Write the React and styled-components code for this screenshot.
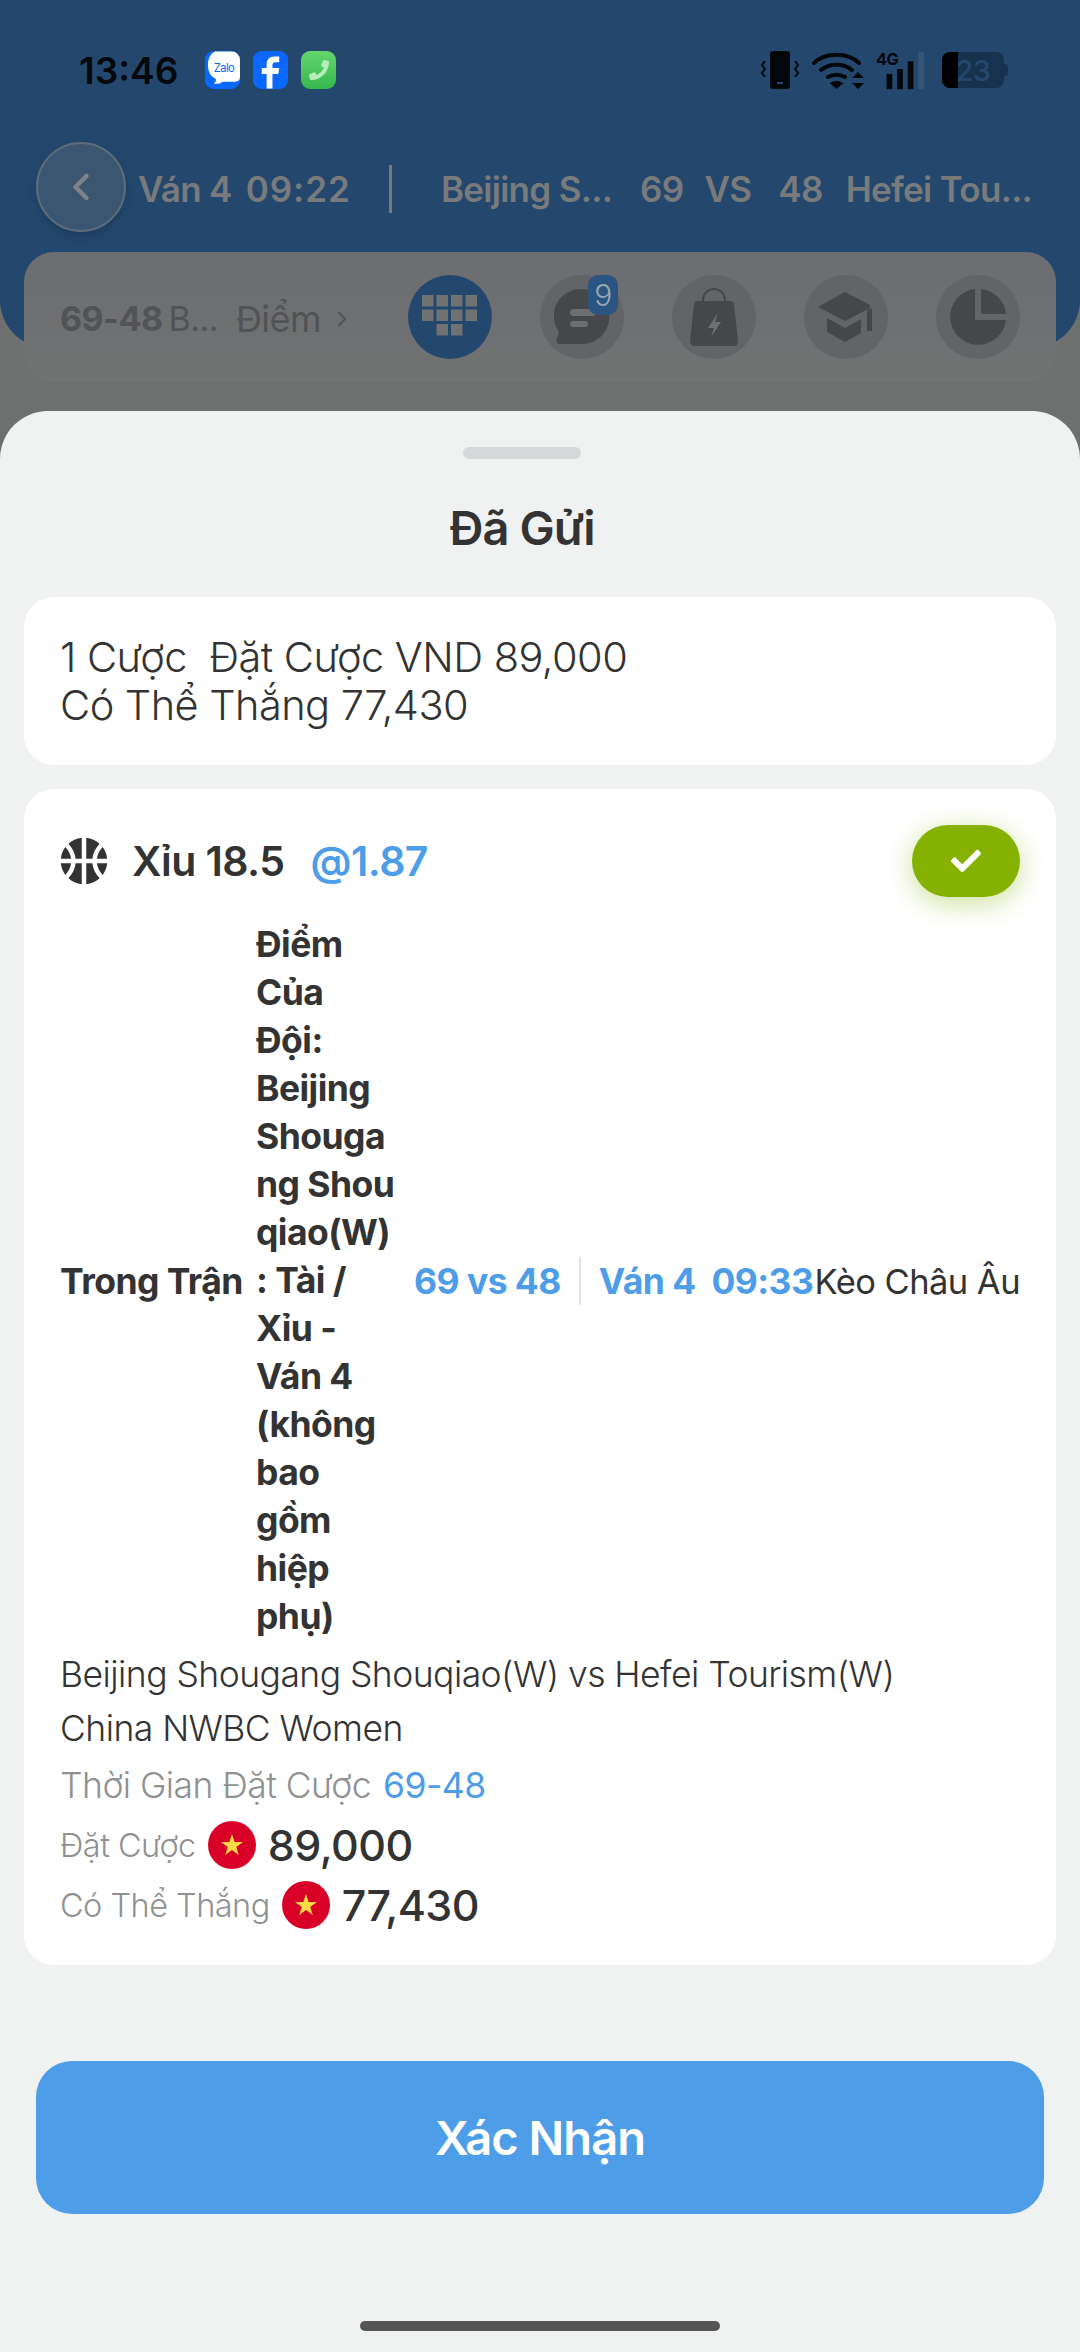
import React from 'react';
import styled, { createGlobalStyle } from 'styled-components';
import { FaBasketballBall, FaCheck, FaPhoneAlt } from 'react-icons/fa';
import { ChevronLeft, ChevronRight } from 'lucide-react';

const GlobalStyle = createGlobalStyle`
  html, body {
    margin: 0;
    padding: 0;
    background: #6e6f6f;
  }
  * {
    box-sizing: border-box;
  }
  body {
    font-family: Inter, "Noto Sans", sans-serif;
    letter-spacing: -0.034em;
  }
`;

const Page = styled.div`
  position: relative;
  width: 1080px;
  height: 2352px;
  overflow: hidden;
  background: #6e6f6f;
`;

const Header = styled.div`
  height: 348px;
  padding: 50px 36px 0 36px;
  background: #24486d;
  border-radius: 0 0 48px 48px;
`;

const StatusBar = styled.div`
  height: 40px;
  display: flex;
  align-items: center;
  padding: 0 36px 0 43px;
`;

const Time = styled.span`
  font-size: 37px;
  font-weight: 600;
  letter-spacing: 0;
  color: #05090e;
  margin-right: 27px;
`;

const AppIcon = styled.div`
  width: 35px;
  height: 38px;
  margin-right: 13px;
  border-radius: 9px;
  overflow: hidden;
  display: flex;
  align-items: center;
  justify-content: center;
  background: ${(p) => p.$bg};
  color: #b6ecb8;
`;

const StatusRight = styled.div`
  margin-left: auto;
  display: flex;
  align-items: center;
  gap: 12px;
`;

const Battery = styled.div`
  position: relative;
  width: 62px;
  height: 36px;
  margin-left: 6px;
  border-radius: 8px;
  overflow: hidden;
  background: #17324e;
  display: flex;
  align-items: center;
  justify-content: center;
  font-size: 29px;
  font-weight: 500;
  color: #24486d;
  &::before {
    content: '';
    position: absolute;
    left: 0;
    top: 0;
    bottom: 0;
    width: 16px;
    background: #000;
  }
`;

const BatteryCap = styled.div`
  width: 4px;
  height: 12px;
  margin-left: -12px;
  border-radius: 0 3px 3px 0;
  background: #17324e;
`;

const TitleRow = styled.div`
  margin-top: 54px;
  height: 90px;
  display: flex;
  align-items: center;
  font-size: 35px;
  font-weight: 600;
  letter-spacing: -0.02em;
  color: #787a7c;
  white-space: nowrap;
`;

const BackButton = styled.div`
  width: 90px;
  height: 90px;
  margin: 0 12px 4px 0;
  flex-shrink: 0;
  border-radius: 50%;
  border: 2px solid #5c6c7c;
  background: #3b5670;
  box-shadow: 0 4px 8px rgba(20, 50, 80, 0.5);
  display: flex;
  align-items: center;
  justify-content: center;
  color: #7d8388;
`;

const TitleDivider = styled.div`
  width: 3px;
  height: 48px;
  margin: 0 49px 0 38px;
  flex-shrink: 0;
  background: #787a7c;
`;

const Score = styled.span`
  margin-left: ${(p) => p.$gap}px;
  letter-spacing: ${(p) => (p.$wide ? '1px' : 'inherit')};
`;

const Toolbar = styled.div`
  position: relative;
  margin: -96px 24px 0 24px;
  height: 130px;
  padding: 0 36px;
  border-radius: 30px;
  background: linear-gradient(#6b6d71, #717272);
  display: flex;
  align-items: center;
`;

const ToolbarLabel = styled.div`
  width: 348px;
  padding-top: 3px;
  display: flex;
  align-items: center;
  font-size: 34px;
  color: #525354;
  white-space: nowrap;
  b {
    font-weight: 700;
    margin-right: 6px;
  }
  span {
    margin: 0 8px 0 18px;
    font-size: 36px;
  }
`;

const ToolButton = styled.div`
  position: relative;
  width: 84px;
  height: 84px;
  margin-right: 48px;
  flex-shrink: 0;
  border-radius: 50%;
  background: ${(p) => (p.$active ? '#24486d' : '#626467')};
  color: #464748;
  display: flex;
  align-items: center;
  justify-content: center;
  &:last-child {
    margin-right: 0;
  }
`;

const ToolBadge = styled.div`
  position: absolute;
  top: 0;
  right: 6px;
  width: 30px;
  height: 40px;
  border-radius: 10px;
  background: #2a5583;
  color: #9aa7b3;
  font-size: 30px;
  font-weight: 300;
  display: flex;
  align-items: center;
  justify-content: center;
`;

const Sheet = styled.div`
  position: absolute;
  left: 0;
  right: 0;
  top: 411px;
  bottom: 0;
  padding: 0 24px;
  border-radius: 48px 48px 0 0;
  background: #f0f1f1;
  display: flex;
  flex-direction: column;
  color: #333;
`;

const Handle = styled.div`
  width: 118px;
  height: 12px;
  margin: 36px 0 0 439px;
  border-radius: 6px;
  background: #d6d7d9;
`;

const SheetTitle = styled.h2`
  margin: 41px 36px 0 0;
  height: 97px;
  font-size: 47px;
  font-weight: 600;
  line-height: 56px;
  letter-spacing: -0.02em;
  text-align: center;
  color: #333;
`;

const Card = styled.div`
  background: #fff;
  border-radius: 30px;
  padding: ${(p) => p.$padding};
  margin-bottom: 24px;
`;

const SummaryLine = styled.div`
  font-size: 41.5px;
  line-height: 48px;
  font-weight: 300;
  white-space: pre;
`;

const BetHead = styled.div`
  display: flex;
  align-items: center;
  height: 72px;
  font-size: 41px;
  font-weight: 600;
`;

const SportIcon = styled(FaBasketballBall)`
  transform: rotate(-45deg);
`;

const BetName = styled.span`
  margin-left: 24px;
`;

const Odds = styled.span`
  margin-left: 26px;
  color: #4d9de8;
`;

const CheckPill = styled.div`
  margin-left: auto;
  width: 108px;
  height: 72px;
  border-radius: 36px;
  background: #85b200;
  box-shadow: 0 6px 28px rgba(133, 178, 0, 0.4);
  color: #fff;
  display: flex;
  align-items: center;
  justify-content: center;
`;

const MarketRow = styled.div`
  display: flex;
  align-items: center;
  margin-top: 24px;
  margin-bottom: 6px;
  font-size: 35.5px;
  font-weight: 700;
`;

const MarketLabel = styled.div`
  flex-shrink: 0;
  width: 196px;
  white-space: nowrap;
`;

const MarketName = styled.div`
  flex-shrink: 0;
  width: 140px;
  line-height: 48px;
  overflow-wrap: break-word;
`;

const LiveInfo = styled.div`
  margin-left: 18px;
  flex-shrink: 0;
  display: flex;
  align-items: center;
  color: #4d9de8;
  white-space: pre;
`;

const LiveDivider = styled.div`
  width: 2px;
  height: 48px;
  margin: 0 18px;
  background: #e3e3e3;
`;

const OddsType = styled.div`
  margin-left: auto;
  font-weight: 400;
  font-size: 34.5px;
  white-space: nowrap;
`;

const InfoLine = styled.div`
  display: flex;
  align-items: center;
  height: ${(p) => p.$height || 54}px;
  font-size: ${(p) => p.$size || 35.5}px;
  font-weight: 300;
  color: ${(p) => (p.$grey ? '#8f9193' : '#333')};
  white-space: nowrap;
`;

const Accent = styled.span`
  margin-left: 12px;
  color: #4d9de8;
  font-weight: 400;
`;

const Amount = styled.span`
  margin-left: 12px;
  font-size: 43px;
  font-weight: 500;
  color: #333;
`;

const Flag = styled.div`
  width: 48px;
  height: 48px;
  margin-left: 12px;
  flex-shrink: 0;
`;

const ConfirmButton = styled.button`
  margin: 72px 12px 0 12px;
  height: 153px;
  flex-shrink: 0;
  border: 0;
  border-radius: 36px;
  background: #4d9de8;
  color: #fff;
  font-family: inherit;
  font-size: 47px;
  font-weight: 600;
  letter-spacing: -0.02em;
`;

const HomeIndicator = styled.div`
  width: 360px;
  height: 10px;
  margin: 107px 0 0 336px;
  border-radius: 5px;
  background: #555;
`;

const ZaloIcon = () => (
  <svg width="36" height="38" viewBox="0 0 36 38">
    <rect width="36" height="38" fill="#0a68fe" />
    <path d="M10 0h26v26q0 5-5 5H18q-3 3-9 2 3-2 2-5Q3 24 3 14 3 4 10 0z" fill="#fff" />
    <text x="19.5" y="21" fontSize="11.5" fontFamily="Inter, sans-serif" textAnchor="middle" fill="#0a68fe">Zalo</text>
  </svg>
);

const FacebookIcon = () => (
  <svg width="36" height="38" viewBox="0 0 36 38">
    <rect width="36" height="38" fill="#0a68fe" />
    <path d="M14 38V23H9v-6h5v-4c0-5 3-8 8-8h5v6h-4c-2 0-3 1-3 3v3h7l-1 6h-6v15z" fill="#fff" />
  </svg>
);

const VibrateIcon = () => (
  <svg width="40" height="40" viewBox="0 0 40 40" fill="none">
    <rect x="10" y="1" width="20" height="38" rx="3" fill="#02070b" />
    <rect x="17" y="32" width="6" height="2" fill="#24486d" />
    <path d="M5 11l-3 4 3 4-3 4 3 4M35 11l3 4-3 4 3 4-3 4" stroke="#02070b" strokeWidth="2" />
  </svg>
);

const WifiIcon = () => (
  <svg width="52" height="40" viewBox="0 0 52 40" fill="none">
    <path d="M2 13C13 2 36 2 47 13M9 20c8-7 23-7 31 0M16 27c5-3 12-3 17 0" stroke="#02070b" strokeWidth="4" strokeLinecap="round" />
    <path d="M24.500 39l-7-6q7-4 14 0zM46 22l6 6H40zM46 39l-6-6h12z" fill="#02070b" />
  </svg>
);

const SignalIcon = () => (
  <svg width="48" height="40" viewBox="0 0 50 40">
    <text x="0" y="15" fontSize="17" fontWeight="700" fontFamily="Inter, sans-serif" fill="#02070b">4G</text>
    <rect x="11" y="24" width="6" height="16" fill="#02070b" />
    <rect x="22" y="19" width="6" height="21" fill="#02070b" />
    <rect x="33" y="11" width="6" height="29" fill="#02070b" />
    <rect x="44" y="1" width="6" height="39" fill="#335676" />
  </svg>
);

const GridIcon = () => (
  <svg width="56" height="44" viewBox="0 0 56 44" fill="#707172">
    {[0, 14.500, 29, 43.500].map((x) => <rect key={`a${x}`} x={x} y="0" width="11.500" height="11.500" />)}
    {[0, 14.500, 29, 43.500].map((x) => <rect key={`b${x}`} x={x} y="14.500" width="11.500" height="11.500" />)}
    {[14.500, 29].map((x) => <rect key={`c${x}`} x={x} y="29" width="11.500" height="11.500" />)}
  </svg>
);

const ChatIcon = () => (
  <svg width="56" height="56" viewBox="0 0 56 56">
    <path d="M28 0a27 27 0 0 1 0 55H6q-5 0-3-6l2-6A27 27 0 0 1 28 0z" fill="#464748" />
    <rect x="16" y="20" width="26" height="7" rx="3.500" fill="#6c6e70" />
    <rect x="16" y="32" width="18" height="6" rx="3" fill="#6c6e70" />
  </svg>
);

const BagIcon = () => (
  <svg width="48" height="58" viewBox="0 0 48 58" fill="none">
    <path d="M13 14V12a11 11 0 0 1 22 0v2" stroke="#464748" strokeWidth="2" />
    <path d="M8 13h32q3 0 4 3l4 37q0 5-4 5H4q-4 0-4-5l4-37q1-3 4-3z" fill="#464748" />
    <path d="M28 25l-10 15h6l-3 9 10-15h-6z" fill="#707172" />
  </svg>
);

const CapIcon = () => (
  <svg width="56" height="50" viewBox="0 0 56 50" fill="#464748">
    <path d="M27 0l25 13v3L27 29 0 15z" />
    <path d="M49 18l5-2v23h-5z" />
    <path d="M9 26l18 10 16-9v14L27 50 9 40z" />
  </svg>
);

const PieIcon = () => (
  <svg width="56" height="56" viewBox="0 0 56 56" fill="#464748">
    <path d="M25 0v31h31a28 28 0 1 1-31-31z" />
    <path d="M31 0a28 28 0 0 1 25 25H31z" />
  </svg>
);

const VietnamFlag = () => (
  <svg width="48" height="48" viewBox="0 0 48 48">
    <circle cx="24" cy="24" r="24" fill="#d80027" />
    <path d="M24 13l2.600 8h8.400l-6.800 5 2.600 8-6.800-5-6.800 5 2.600-8-6.800-5h8.400z" fill="#ffda44" />
  </svg>
);

const App = () => (
  <Page>
    <GlobalStyle />
    <Header>
      <StatusBar>
        <Time>13:46</Time>
        <AppIcon $bg="#0a68fe"><ZaloIcon /></AppIcon>
        <AppIcon $bg="#0a68fe"><FacebookIcon /></AppIcon>
        <AppIcon $bg="linear-gradient(#66d66f, #35b84c)"><FaPhoneAlt size={20} style={{ transform: 'scaleX(-1)' }} /></AppIcon>
        <StatusRight>
          <VibrateIcon />
          <WifiIcon />
          <SignalIcon />
          <Battery>23</Battery>
          <BatteryCap />
        </StatusRight>
      </StatusBar>
      <TitleRow>
        <BackButton><ChevronLeft size={44} strokeWidth={2.500} /></BackButton>
        Ván 4
        <Score $gap={14} $wide>09:22</Score>
        <TitleDivider />
        Beijing S...
        <Score $gap={28}>69</Score>
        <Score $gap={21}>VS</Score>
        <Score $gap={27}>48</Score>
        <Score $gap={23}>Hefei Tou...</Score>
      </TitleRow>
    </Header>
    <Toolbar>
      <ToolbarLabel>
        <b>69-48</b>B...
        <span>Điểm</span>
        <ChevronRight size={26} strokeWidth={1.800} />
      </ToolbarLabel>
      <ToolButton $active><GridIcon /></ToolButton>
      <ToolButton>
        <ChatIcon />
        <ToolBadge>9</ToolBadge>
      </ToolButton>
      <ToolButton><BagIcon /></ToolButton>
      <ToolButton><CapIcon /></ToolButton>
      <ToolButton><PieIcon /></ToolButton>
    </Toolbar>
    <Sheet>
      <Handle />
      <SheetTitle>Đã Gửi</SheetTitle>
      <Card $padding="36px">
        <SummaryLine>1 Cược  Đặt Cược VND 89,000</SummaryLine>
        <SummaryLine>Có Thể Thắng 77,430</SummaryLine>
      </Card>
      <Card $padding="36px 36px 30px 36px">
        <BetHead>
          <SportIcon size={48} color="#333" />
          <BetName>Xỉu 18.5</BetName>
          <Odds>@1.87</Odds>
          <CheckPill><FaCheck size={30} /></CheckPill>
        </BetHead>
        <MarketRow>
          <MarketLabel>Trong Trận</MarketLabel>
          <MarketName>Điểm Của Đội: Beijing Shougang&nbsp;Shouqiao(W) : Tài / Xỉu - Ván 4 (không bao gồm hiệp phụ)</MarketName>
          <LiveInfo>
            69 vs 48
            <LiveDivider />
            Ván 4  09:33
          </LiveInfo>
          <OddsType>Kèo Châu Âu</OddsType>
        </MarketRow>
        <InfoLine>Beijing Shougang Shouqiao(W) vs Hefei Tourism(W)</InfoLine>
        <InfoLine>China NWBC Women</InfoLine>
        <InfoLine $grey $height={60}>Thời Gian Đặt Cược<Accent>69-48</Accent></InfoLine>
        <InfoLine $grey $size={32.5} $height={60}>Đặt Cược<Flag><VietnamFlag /></Flag><Amount>89,000</Amount></InfoLine>
        <InfoLine $grey $size={32.5} $height={60}>Có Thể Thắng<Flag><VietnamFlag /></Flag><Amount>77,430</Amount></InfoLine>
      </Card>
      <ConfirmButton>Xác Nhận</ConfirmButton>
      <HomeIndicator />
    </Sheet>
  </Page>
);

export default App;
